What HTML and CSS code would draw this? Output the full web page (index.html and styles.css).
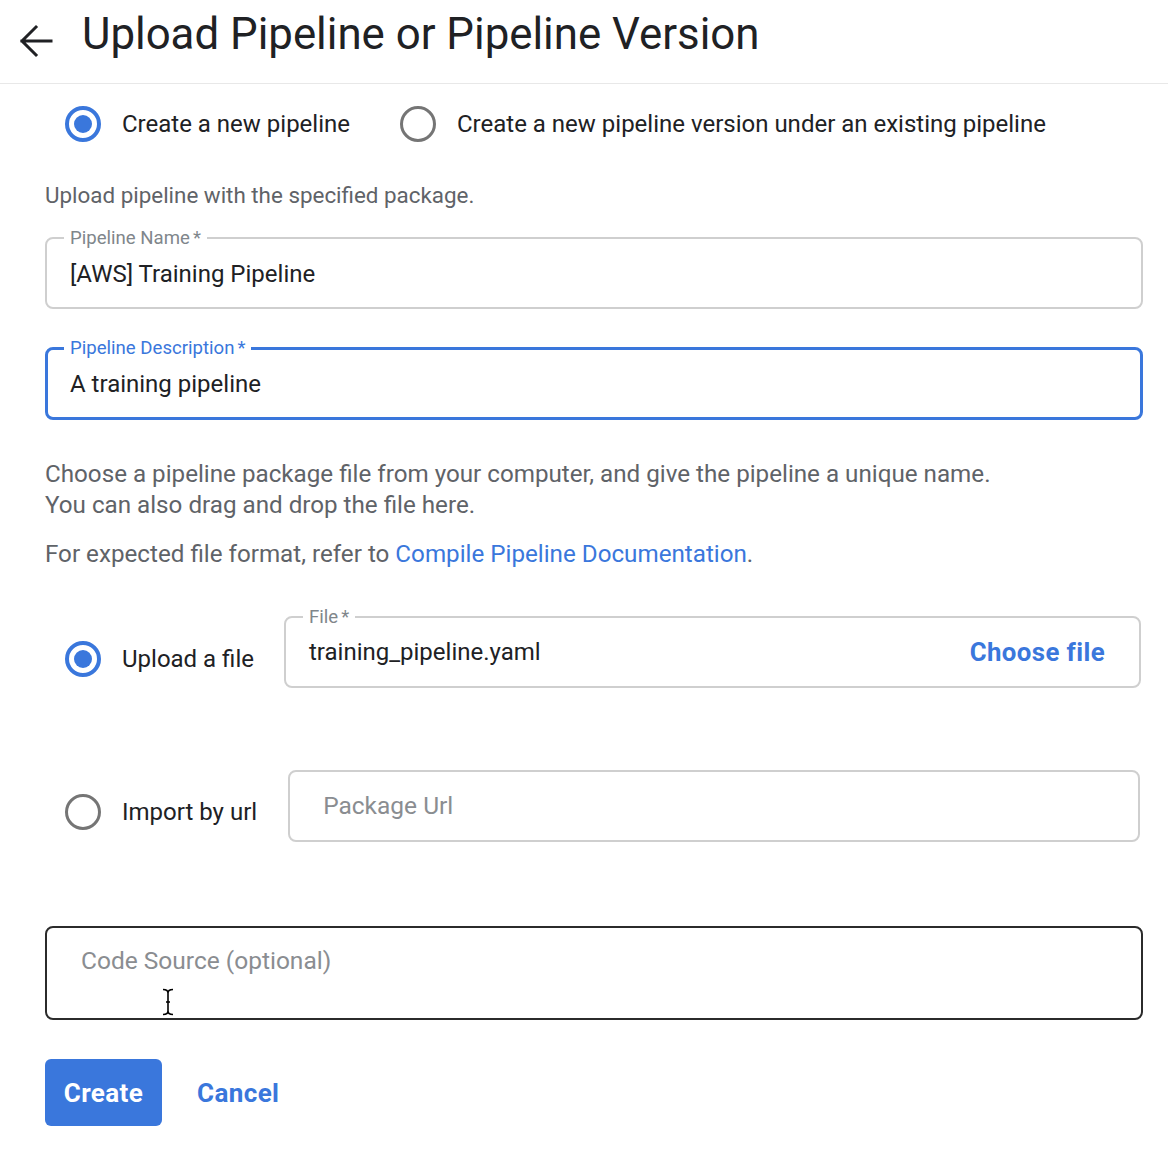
FILE: index.html
```html
<!DOCTYPE html>
<html lang="en">
<head>
<meta charset="utf-8">
<title>Upload Pipeline or Pipeline Version</title>
<link rel="stylesheet" href="styles.css">
</head>
<body>
<header class="top">
  <svg class="back" width="34" height="34" viewBox="0 0 34 34" aria-hidden="true">
    <path d="M3 17H32M17 3L3 17L17 31" fill="none" stroke="#202124" stroke-width="3" stroke-linecap="square" stroke-linejoin="miter"/>
  </svg>
  <h1 class="title">Upload Pipeline or Pipeline Version</h1>
</header>
<main class="form">
  <div class="mode-row">
    <label class="radio-opt"><span class="radio checked"></span><span class="radio-text">Create a new pipeline</span></label>
    <label class="radio-opt"><span class="radio"></span><span class="radio-text">Create a new pipeline version under an existing pipeline</span></label>
  </div>
  <p class="hint">Upload pipeline with the specified package.</p>

  <fieldset class="field">
    <legend class="legend">Pipeline Name<span class="ast">*</span></legend>
    <div class="value">[AWS] Training Pipeline</div>
  </fieldset>

  <fieldset class="field focused">
    <legend class="legend">Pipeline Description<span class="ast">*</span></legend>
    <div class="value">A training pipeline</div>
  </fieldset>

  <p class="para">Choose a pipeline package file from your computer, and give the pipeline a unique name.<br>You can also drag and drop the file here.</p>
  <p class="para para-doc">For expected file format, refer to <a class="link" href="#">Compile Pipeline Documentation</a>.</p>

  <div class="source-row">
    <label class="radio-opt src-opt"><span class="radio checked"></span><span class="radio-text">Upload a file</span></label>
    <fieldset class="field file-field">
      <legend class="legend">File<span class="ast">*</span></legend>
      <div class="file-inner">
        <div class="value">training_pipeline.yaml</div>
        <span class="choose">Choose file</span>
      </div>
    </fieldset>
  </div>

  <div class="source-row url-row">
    <label class="radio-opt src-opt"><span class="radio"></span><span class="radio-text">Import by url</span></label>
    <div class="box url-box"><span class="placeholder">Package Url</span></div>
  </div>

  <div class="box code-box">
    <span class="placeholder">Code Source (optional)</span>
    <svg class="ibeam" width="14" height="28" viewBox="0 0 14 28" aria-hidden="true">
      <path d="M2 1.5C5 1.5 7 2.5 7 5V23C7 25.5 5 26.5 2 26.5M12 1.5C9 1.5 7 2.5 7 5M7 23C7 25.5 9 26.5 12 26.5M5 14H9" fill="none" stroke="#000" stroke-width="1.6"/>
    </svg>
  </div>

  <div class="actions">
    <button class="btn-primary" type="button">Create</button>
    <button class="btn-text" type="button">Cancel</button>
  </div>
</main>
</body>
</html>
```

FILE: styles.css
```css
html, body {
  margin: 0;
  padding: 0;
  background: #ffffff;
}
body {
  font-family: Roboto, "Noto Sans", "Liberation Sans", sans-serif;
  color: #202124;
  width: 1168px;
  height: 1162px;
  overflow: hidden;
}
.top {
  height: 84px;
  box-sizing: border-box;
  border-bottom: 1px solid #e8e8e8;
  display: flex;
  align-items: center;
  padding-left: 19px;
}
.back {
  display: block;
  margin-right: 29px;
  margin-top: -2px;
}
.title {
  margin: 0;
  font-weight: 400;
  font-size: 43.8px;
  letter-spacing: 0;
  color: #202124;
  margin-top: -16px;
}
.form {
  padding: 0 25px 0 45px;
}
.mode-row {
  display: flex;
  align-items: center;
  margin-top: 22px;
  padding-left: 20px;
  gap: 50px;
}
.radio-opt {
  display: flex;
  align-items: center;
}
.radio {
  box-sizing: border-box;
  width: 36px;
  height: 36px;
  border-radius: 50%;
  border: 3.5px solid #757575;
  display: flex;
  align-items: center;
  justify-content: center;
  flex: none;
}
.radio.checked {
  border: 4px solid #3a77dc;
}
.radio.checked::after {
  content: "";
  width: 18px;
  height: 18px;
  border-radius: 50%;
  background: #3a77dc;
}
.radio-text {
  margin-left: 21px;
  font-size: 24px;
  color: #202124;
  line-height: 30px;
}
.hint {
  margin: 38px 0 0;
  font-size: 22.4px;
  line-height: 30px;
  color: #5f6368;
}
.field {
  margin: 16px 0 0;
  border: 2px solid #cfcfcf;
  border-radius: 8px;
  padding: 9px 23px 18px;
  min-width: 0;
}
.legend {
  padding: 0 6px 0 6px;
  margin-left: -6px;
  font-size: 18.6px;
  line-height: 24px;
  color: #80868b;
}
.ast {
  margin-left: 3px;
}
.value {
  font-size: 24px;
  line-height: 30px;
  color: #202124;
}
.field.focused {
  margin-top: 27px;
  border: 3px solid #3a77dc;
  padding: 9px 22px 18px;
}
.field.focused .legend {
  color: #3a77dc;
}
.para {
  margin: 39px 0 0;
  font-size: 24.2px;
  line-height: 31px;
  color: #5f6368;
}
.para-doc {
  margin-top: 18px;
}
.link {
  color: #3a77dc;
  text-decoration: none;
}
.source-row {
  display: flex;
  align-items: center;
  margin-top: 35px;
  padding-right: 2px;
}
.src-opt {
  padding-left: 20px;
  padding-top: 24px;
  margin-right: 30px;
}
.file-field {
  flex: 1;
  margin: 0;
  padding-top: 8px;
  padding-bottom: 19px;
}
.file-inner {
  display: flex;
  align-items: center;
  justify-content: space-between;
}
.choose {
  font-size: 25.8px;
  font-weight: 700;
  color: #3a77dc;
  margin-right: 11px;
  letter-spacing: 0.4px;
}
.url-row {
  margin-top: 82px;
  padding-right: 3px;
}
.url-row .src-opt {
  padding-top: 11px;
  margin-right: 31px;
}
.box {
  box-sizing: border-box;
  border: 2px solid #cfcfcf;
  border-radius: 8px;
}
.url-box {
  flex: 1;
  height: 72px;
  display: flex;
  align-items: center;
  padding-left: 33px;
}
.placeholder {
  font-size: 24.5px;
  line-height: 30px;
  color: #8a8d91;
}
.code-box {
  position: relative;
  margin-top: 84px;
  height: 94px;
  border: 2px solid #2b2b2b;
  padding: 18px 0 0 34px;
}
.ibeam {
  position: absolute;
  left: 114px;
  top: 60px;
}
.actions {
  display: flex;
  align-items: center;
  margin-top: 39px;
}
.btn-primary {
  font-family: inherit;
  width: 117px;
  height: 67px;
  border: none;
  border-radius: 6px;
  background: #3a77dc;
  color: #ffffff;
  font-size: 26px;
  font-weight: 700;
  padding: 0;
  letter-spacing: 0.4px;
}
.btn-text {
  font-family: inherit;
  background: none;
  border: none;
  color: #3a77dc;
  font-size: 26px;
  font-weight: 700;
  margin-left: 35px;
  padding: 0;
  letter-spacing: 0.4px;
}
```
